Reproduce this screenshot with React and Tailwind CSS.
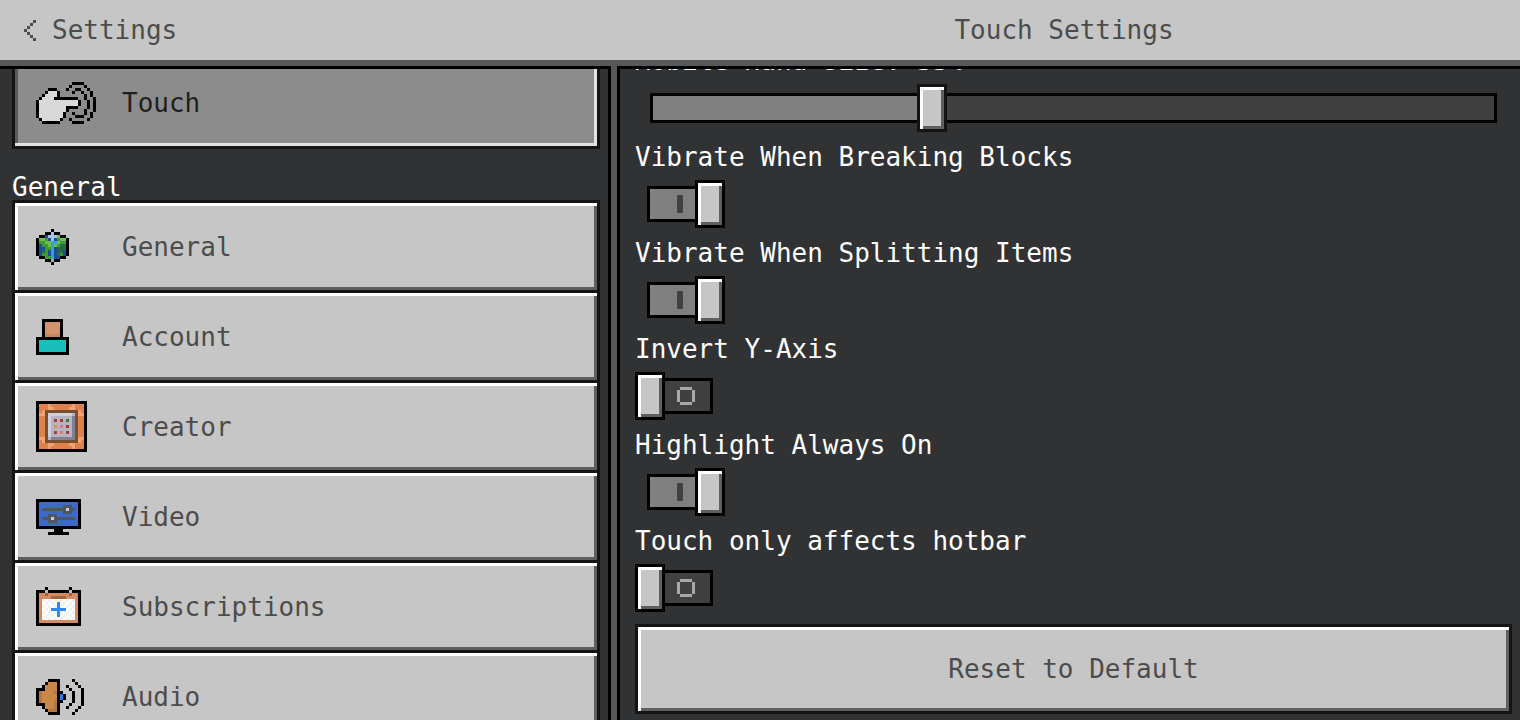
import React from 'react';

const INK = '#000000';

// Every icon is a grid of characters, each one mapped to a palette colour
const ICONS = {
  back: {
    palette: { k: '#4c4c4c' },
    rows: ['   k', '  k ', ' k  ', 'k   ', ' k  ', '  k ', '   k'],
  },
  touch: {
    palette: { k: INK, w: '#d9d9d9' },
    rows: [
      '            kkkk    ',
      '           k    k   ',
      '    kkk   k  kk  k  ',
      '   kwwwk    k  k  k ',
      '  kwwwwk        k k ',
      ' kwwwwkkkkkkkk  k  k',
      'kwwwwwwwwwwwwwk  k k',
      'kwwwwwwwwwwwwwk  k k',
      'kwwwwwwwwwkkkk   k k',
      'kwwwwwwwwwk     k  k',
      'kwwwwwwwwk  k   k k ',
      'kwwwwwwwwk   kkk  k ',
      ' kwwwwwwk  k     k  ',
      '  kkkkkk    kkkk    ',
    ],
  },
  globe: {
    palette: { k: INK, g: '#3d9a37', l: '#6cc04a', d: '#1f6b4a', b: '#1d4c96', c: '#35a0e0', w: '#a9c6de', s: '#a8a8a8' },
    rows: [
      '     k     ',
      '   kkwkk   ',
      ' kkbwwwlkk ',
      'kllgbwbgllk',
      'kggllcclggk',
      'kbgglclgddk',
      'kbbggcbdddk',
      'kbdgbcbddbk',
      'kbggbcbdgbk',
      ' kkggcbbkk ',
      '   kkskk   ',
      '     k     ',
    ],
  },
  account: {
    palette: { k: INK, s: '#d5926e', d: '#c48762', t: '#18bfbd' },
    rows: [
      '  kkkkkkk  ',
      '  ksssssk  ',
      '  ksssssk  ',
      '  ksssssk  ',
      '  ksssssk  ',
      '  kdddddk  ',
      'kkkkkkkkkkk',
      'ktttttttttk',
      'ktttttttttk',
      'ktttttttttk',
      'ktttttttttk',
      'kkkkkkkkkkk',
    ],
  },
  creator: {
    palette: {
      k: INK, o: '#e0814b', l: '#f0a274', b: '#76502f', w: '#d0d0dc', g: '#b6b4c2', s: '#83818f',
      r: '#a43c3c', p: '#c98088', n: '#4a7038', y: '#c79c52',
    },
    rows: [
      'kkkkkkkkkkkkkkkkk',
      'koooloooooooloook',
      'kooollooooolloook',
      'kolbbbbbbbbbbblok',
      'kllbwwwwwwwwgbllk',
      'koobwgggggggsbook',
      'koobwgrgrgngsbook',
      'koobwgggggggsbook',
      'koobwgygpgrgsbook',
      'koobwgggggggsbook',
      'koobwgrgpgrgsbook',
      'koobwgggggggsbook',
      'kllbgssssssssbllk',
      'kolbbbbbbbbbbblok',
      'kooollooooolloook',
      'koooloooooooloook',
      'kkkkkkkkkkkkkkkkk',
    ],
  },
  video: {
    palette: { k: INK, b: '#3c6acb', g: '#4e5565', w: '#cfcfcf' },
    rows: [
      'kkkkkkkkkkkkkkk',
      'kbbbbbbbbbbbbbk',
      'kbbbbbbbbgggbbk',
      'kbggggggggwggbk',
      'kbbbbbbbbgggbbk',
      'kbbbgggbbbbbbbk',
      'kbgggwgggggggbk',
      'kbbbgggbbbbbbbk',
      'kbbbbbbbbbbbbbk',
      'kkkkkkkkkkkkkkk',
      '      kkk      ',
      '    kkkkkkk    ',
    ],
  },
  subscriptions: {
    palette: { k: INK, o: '#d58b62', d: '#9c6544', w: '#ffffff', v: '#f1f1f1', b: '#2b8cf0', s: '#bdbdbd' },
    rows: [
      '   k       k   ',
      'kkkskkkkkkkskkk',
      'koodooooooodook',
      'koooodddddooook',
      'kovwvwvwvwvwvok',
      'kowvwvwbwvwvwok',
      'kovwvwvbvwvwvok',
      'kowvwbbbbbwvwok',
      'kovwvwvbvwvwvok',
      'kowvwvwbwvwvwok',
      'kovwvwvwvwvwvok',
      'koooooooooooook',
      'kkkkkkkkkkkkkkk',
    ],
  },
  audio: {
    palette: { k: INK, o: '#cb864a', d: '#b57541', b: '#2079f0' },
    rows: [
      '    kkkk    k   ',
      '   koook     k  ',
      '  kooook  k   k ',
      'kkkooook   k   k',
      'kdoooodkk   k  k',
      'kdoooookbk  k  k',
      'kdoooookbk  k  k',
      'kdoooodkk   k  k',
      'kkkooodk   k   k',
      '  kooodk  k   k ',
      '   kdddk     k  ',
      '    kkkk    k   ',
    ],
  },
};

// Shared shading for raised and pressed surfaces
const RAISED = 'bg-[#c6c6c6] shadow-[inset_3px_3px_0_#ffffff,inset_-3px_-3px_0_#5f5f5f]';
const PRESSED = 'bg-[#8c8c8c] shadow-[inset_-3px_-3px_0_#e3e3e3,inset_3px_3px_0_#5a5858]';

const PixelIcon = ({ name }) => {
  const { rows, palette } = ICONS[name];
  const cols = rows[0].length;
  return (
    <svg
      width={cols * 3}
      height={rows.length * 3}
      viewBox={`0 0 ${cols} ${rows.length}`}
      shapeRendering="crispEdges"
      aria-hidden="true"
      className="shrink-0"
    >
      {rows.map((row, y) =>
        row.split('').map((c, x) =>
          c === ' ' ? null : <rect key={`${x}-${y}`} x={x} y={y} width="1" height="1" fill={palette[c]} />
        )
      )}
    </svg>
  );
};

const NavItem = ({ icon, label, active, onClick }) => (
  <button
    type="button"
    onClick={onClick}
    aria-current={active ? 'page' : undefined}
    className="block h-[90px] w-full shrink-0 border-x-[3px] border-t-[3px] border-[#141414] text-left last:h-[93px] last:border-b-[3px]"
  >
    <span className={`flex h-full items-center pl-[21px] ${active ? `${PRESSED} text-[#1e1e1e]` : `${RAISED} text-[#4c4c4c]`}`}>
      <span className="flex w-[86px] shrink-0">
        <PixelIcon name={icon} />
      </span>
      {label}
    </span>
  </button>
);

const Toggle = ({ id, label, defaultChecked }) => {
  const [on, setOn] = React.useState(defaultChecked);
  return (
    <div className="shrink-0">
      <label htmlFor={id} className="block pt-1 pb-0.5 leading-[42px]">{label}</label>
      <label htmlFor={id} className="grid h-12 w-[90px] cursor-pointer items-center">
        <input
          id={id}
          type="checkbox"
          checked={on}
          onChange={(e) => setOn(e.target.checked)}
          className="col-start-1 row-start-1 h-12 w-full appearance-none"
        />
        <span
          className={`col-start-1 row-start-1 mx-3 flex h-9 items-center border-[3px] border-black pl-[27px] ${on ? 'bg-[#808080]' : 'bg-[#404040]'}`}
        >
          {on ? (
            <span className="h-[18px] w-1.5 bg-[#404040]" />
          ) : (
            <svg width="18" height="18" viewBox="0 0 6 6" shapeRendering="crispEdges" aria-hidden="true">
              <path d="M1 0h4v1H1zM1 5h4v1H1zM0 1h1v4H0zM5 1h1v4H5z" fill="#a8a8a8" />
            </svg>
          )}
        </span>
        <span className={`col-start-1 row-start-1 h-12 w-[30px] border-[3px] border-black ${RAISED} ${on ? 'justify-self-end' : ''}`} />
      </label>
    </div>
  );
};

const SizeSlider = () => {
  const [value, setValue] = React.useState(32.7);
  return (
    <div className="shrink-0">
      <label htmlFor="hand-size" className="block pt-1 pb-0.5 leading-[42px]">Mobile Hand Size: {Math.round(value)}%</label>
      <div className="flex h-12 items-center px-[15px]">
        <input
          id="hand-size"
          type="range"
          min="0"
          max="100"
          step="any"
          value={value}
          onChange={(e) => setValue(Number(e.target.value))}
          style={{ '--fill': `${value}%` }}
          className="h-12 w-full appearance-none bg-transparent [&::-webkit-slider-runnable-track]:h-[30px] [&::-webkit-slider-runnable-track]:bg-[linear-gradient(to_right,#808080_var(--fill),#404040_var(--fill))] [&::-webkit-slider-runnable-track]:shadow-[inset_0_0_0_3px_#000000] [&::-webkit-slider-thumb]:-mt-[9px] [&::-webkit-slider-thumb]:h-12 [&::-webkit-slider-thumb]:w-[30px] [&::-webkit-slider-thumb]:appearance-none [&::-webkit-slider-thumb]:border-[3px] [&::-webkit-slider-thumb]:border-[#141414] [&::-webkit-slider-thumb]:bg-[#c6c6c6] [&::-webkit-slider-thumb]:shadow-[inset_3px_3px_0_#ffffff,inset_-3px_-3px_0_#5f5f5f]"
        />
      </div>
    </div>
  );
};

const GENERAL_ITEMS = [
  { icon: 'globe', label: 'General' },
  { icon: 'account', label: 'Account' },
  { icon: 'creator', label: 'Creator' },
  { icon: 'video', label: 'Video' },
  { icon: 'subscriptions', label: 'Subscriptions' },
  { icon: 'audio', label: 'Audio' },
];

const TOGGLES = [
  { id: 'vibrate-break', label: 'Vibrate When Breaking Blocks', on: true },
  { id: 'vibrate-split', label: 'Vibrate When Splitting Items', on: true },
  { id: 'invert-y', label: 'Invert Y-Axis', on: false },
  { id: 'highlight', label: 'Highlight Always On', on: true },
  { id: 'hotbar-only', label: 'Touch only affects hotbar', on: false },
];

function App() {
  const [active, setActive] = React.useState('Touch');

  return (
    <div className="flex h-screen flex-col overflow-hidden bg-[#313233] font-['DejaVu_Sans_Mono','Liberation_Mono',monospace] text-[26px] leading-8 text-white">
      <header className="flex h-[66px] shrink-0 items-center border-b-[6px] border-[#58585a] bg-[#c6c6c6] text-[#4c4c4c]">
        <div className="w-2/5 pl-6">
          <button type="button" className="flex items-center gap-4">
            <PixelIcon name="back" />
            Settings
          </button>
        </div>
        <h1 className="flex-1 text-center">Touch Settings</h1>
      </header>

      <div className="flex min-h-0 flex-1">
        {/* Section list */}
        <nav className="w-2/5 overflow-hidden border-t-[3px] border-black pr-2 pl-3">
          <div className="-mt-[13px] flex flex-col">
            <div>
              <NavItem icon="touch" label="Touch" active={active === 'Touch'} onClick={() => setActive('Touch')} />
            </div>
            <h2 className="h-[51px] pt-[22px] leading-8">General</h2>
            <div>
              {GENERAL_ITEMS.map((item) => (
                <NavItem key={item.label} {...item} active={active === item.label} onClick={() => setActive(item.label)} />
              ))}
            </div>
          </div>
        </nav>

        <div className="w-3 shrink-0 border-x-[3px] border-black bg-[#58585a]" />

        <main className="min-w-0 flex-1 overflow-hidden border-t-[3px] border-black pr-2 pl-[15px]">
          <div className="-mt-[33px] flex flex-col pb-2">
            <SizeSlider />
            {TOGGLES.map((t) => (
              <Toggle key={t.id} id={t.id} label={t.label} defaultChecked={t.on} />
            ))}
            <button
              type="button"
              className={`mt-3 h-[90px] w-full border-[3px] border-[#141414] text-[#4c4c4c] ${RAISED}`}
            >
              Reset to Default
            </button>
          </div>
        </main>
      </div>
    </div>
  );
}

export default App;
